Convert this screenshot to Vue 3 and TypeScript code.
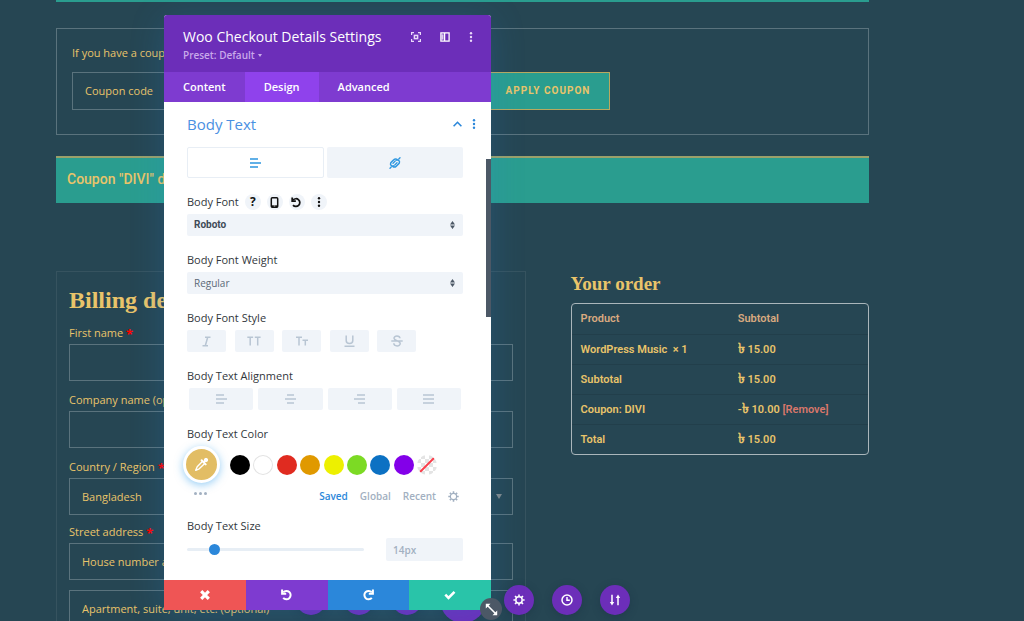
<script setup lang="ts">
import { ref } from 'vue'

interface OrderRow { label: string; sign: string; amount: string; remove?: boolean }

const rows: OrderRow[] = [
  { label: 'WordPress Music \u00a0× 1', sign: '', amount: '15.00' },
  { label: 'Subtotal', sign: '', amount: '15.00' },
  { label: 'Coupon: DIVI', sign: '-', amount: '10.00', remove: true },
  { label: 'Total', sign: '', amount: '15.00' },
]

const swatches = [
  { name: 'Black', cls: 'black' },
  { name: 'White', cls: 'white' },
  { name: 'Red', cls: 'red' },
  { name: 'Orange', cls: 'orange' },
  { name: 'Yellow', cls: 'yellow' },
  { name: 'Green', cls: 'green' },
  { name: 'Blue', cls: 'blue' },
  { name: 'Purple', cls: 'purple' },
  { name: 'Transparent', cls: 'clear' },
]

const alignments = [
  { name: 'Left', d: 'M0 1h8M0 5h11M0 9h8' },
  { name: 'Center', d: 'M2 1h7M0 5h11M2 9h7' },
  { name: 'Right', d: 'M3 1h8M0 5h11M4 9h7' },
  { name: 'Justify', d: 'M0 1h11M0 5h11M0 9h11' },
]

const tabs = ['Content', 'Design', 'Advanced']
const activeTab = ref('Design')
const size = ref(14)
const font = ref('Roboto')
const weight = ref('Regular')
</script>

<template>
  <div class="page">
    <main class="content">
      <div class="notice-edge"></div>

      <form class="coupon" @submit.prevent>
        <label class="coupon-text" for="coupon">If you have a coupon</label>
        <div class="coupon-row">
          <input id="coupon" class="box" type="text" placeholder="Coupon code" />
          <button class="apply" type="submit">APPLY COUPON</button>
        </div>
      </form>

      <p class="banner">Coupon "DIVI" does not exist!</p>

      <div class="columns">
        <section class="billing">
          <h2>Billing details</h2>
          <div class="field">
            <label for="first">First name <b>*</b></label>
            <input id="first" class="box" type="text" />
          </div>
          <div class="field">
            <label for="company">Company name (optional)</label>
            <input id="company" class="box" type="text" />
          </div>
          <div class="field country">
            <label for="country">Country / Region <b>*</b></label>
            <div class="select-wrap">
              <select id="country" class="box"><option>Bangladesh</option></select>
              <span class="caret"></span>
            </div>
          </div>
          <div class="field">
            <label for="street">Street address <b>*</b></label>
            <input id="street" class="box" type="text" placeholder="House number and street name" />
          </div>
          <input class="box" type="text" aria-label="Apartment" placeholder="Apartment, suite, unit, etc. (optional)" />
        </section>

        <section class="order">
          <h2>Your order</h2>
          <table>
            <thead>
              <tr><th>Product</th><th>Subtotal</th></tr>
            </thead>
            <tbody>
              <tr v-for="row in rows" :key="row.label">
                <td>{{ row.label }}</td>
                <td>{{ row.sign }}<span class="taka">৳</span>&nbsp;{{ row.amount }} <a v-if="row.remove" href="#">[Remove]</a></td>
              </tr>
            </tbody>
          </table>
        </section>
      </div>
    </main>

    <nav class="toolbar" aria-label="Builder">
      <button aria-label="Wireframe"></button>
      <button aria-label="Zoom"></button>
      <button aria-label="Desktop"></button>
      <button class="main" aria-label="Toggle builder"></button>
      <button aria-label="Page settings">
        <svg width="12" height="12" viewBox="0 0 12 12" fill="none" stroke="#fff"><circle cx="6" cy="6" r="3.2" stroke-width="1.5" /><path d="M6 .4v2M6 9.6v2M.4 6h2M9.6 6h2M2 2l1.4 1.4M8.6 8.6L10 10M10 2L8.6 3.4M3.4 8.6L2 10" stroke-width="1.6" /></svg>
      </button>
      <button aria-label="History">
        <svg width="12" height="12" viewBox="0 0 12 12" fill="none" stroke="#fff" stroke-width="1.5"><circle cx="6" cy="6" r="5" /><path d="M6 3v3.2h2.8" /></svg>
      </button>
      <button aria-label="Portability">
        <svg width="12" height="12" viewBox="0 0 12 12" fill="none" stroke="#fff" stroke-width="1.5"><path d="M3 .8v8M9 11.2v-8" /><path d="M.8 8h4.4L3 11.4zM6.8 4h4.4L9 .6z" fill="#fff" stroke="none" /></svg>
      </button>
    </nav>

    <aside class="modal" role="dialog" aria-labelledby="modal-title">
      <header>
        <div class="titles">
          <h1 id="modal-title">Woo Checkout Details Settings</h1>
          <button class="preset">Preset: Default <span></span></button>
        </div>
        <div class="tools">
          <button aria-label="Expand">
            <svg width="10" height="10" viewBox="0 0 10 10" fill="none" stroke="#ead9fa" stroke-width="1.2"><path d="M.6 3V.6H3M7 .6h2.4V3M9.4 7v2.4H7M3 9.4H.6V7" /><rect x="3.4" y="3.4" width="3.2" height="3.2" stroke-width="1.5" /></svg>
          </button>
          <button aria-label="Dock">
            <svg width="10" height="10" viewBox="0 0 10 10" fill="none" stroke="#fff" stroke-width="1.3"><rect x=".9" y=".9" width="8.2" height="8.2" /><path d="M4.6 1v8M1.5 3.2h2M1.5 5h2M1.5 6.8h2" /></svg>
          </button>
          <button aria-label="More">
            <svg width="4" height="10" viewBox="0 0 4 10" fill="#ead9fa"><circle cx="2" cy="1.3" r="1.2" /><circle cx="2" cy="5" r="1.2" /><circle cx="2" cy="8.7" r="1.2" /></svg>
          </button>
        </div>
      </header>

      <nav class="tabs">
        <button v-for="t in tabs" :key="t" :class="{ active: t === activeTab }" @click="activeTab = t">{{ t }}</button>
      </nav>

      <div class="body">
        <div class="section-head">
          <h2>Body Text</h2>
          <button aria-label="Collapse">
            <svg width="9" height="6" viewBox="0 0 9 6" fill="none" stroke="#2b87da" stroke-width="1.6"><path d="M.6 5.2L4.5 1.3l3.9 3.9" /></svg>
          </button>
          <button aria-label="Section options">
            <svg width="4" height="10" viewBox="0 0 4 10" fill="#2b87da"><circle cx="2" cy="1.3" r="1.2" /><circle cx="2" cy="5" r="1.2" /><circle cx="2" cy="8.7" r="1.2" /></svg>
          </button>
        </div>

        <div class="modes">
          <button class="on" aria-label="Text">
            <svg width="11" height="10" viewBox="0 0 11 10" stroke="#2e97e0" stroke-width="1.5"><path d="M0 1h8M0 5h11M0 9h8" /></svg>
          </button>
          <button aria-label="Link">
            <svg width="12" height="12" viewBox="0 0 12 12" fill="none" stroke="#2e97e0" stroke-width="1.5" stroke-linecap="round"><path d="M4.800 8.800A2.200 2.200 0 0 1 1.800 5.800L5 2.600A2.200 2.200 0 0 1 8.200 2.600M7.200 3.200A2.200 2.200 0 0 1 10.200 6.200L7 9.400A2.200 2.200 0 0 1 3.800 9.400" /><path d="M4 6.200L6.200 4M5.800 8L8 5.800M1 11.200L2.200 10M9.800 2L11 .800" stroke-width="1.300" /></svg>
          </button>
        </div>

        <div class="group">
          <div class="label-row">
            <label for="font">Body Font</label>
            <button class="mini" aria-label="Help">?</button>
            <button class="mini" aria-label="Responsive">
              <svg width="9" height="11" viewBox="0 0 9 11"><rect x="1.300" y=".8" width="6.400" height="9.400" rx="1" fill="none" stroke="#111" stroke-width="1.500" /><path d="M1.500 8.300h6v2h-6z" fill="#111" /><path d="M3.700 9h1.600" stroke="#fff" stroke-width=".7" /></svg>
            </button>
            <button class="mini" aria-label="Reset">
              <svg width="11" height="11" viewBox="0 0 12 12" fill="none" stroke="#111" stroke-width="1.900"><path d="M2.200 3.400A4.200 4.200 0 1 1 2.200 8.800" /><path d="M1.300 .500v3.900h4" /></svg>
            </button>
            <button class="mini" aria-label="Font options">
              <svg width="4" height="10" viewBox="0 0 4 10" fill="#111"><circle cx="2" cy="1.300" r="1.200" /><circle cx="2" cy="5" r="1.200" /><circle cx="2" cy="8.700" r="1.200" /></svg>
            </button>
          </div>
          <div class="select-wrap">
            <select id="font" v-model="font" class="control strong"><option>Roboto</option></select>
            <svg class="sorter" width="5" height="8" viewBox="0 0 5 8" fill="#4c5866"><path d="M0 3.400L2.500 0 5 3.400zM0 4.600L2.500 8 5 4.600z" /></svg>
          </div>
        </div>

        <div class="group">
          <div class="label-row"><label for="weight">Body Font Weight</label></div>
          <div class="select-wrap">
            <select id="weight" v-model="weight" class="control"><option>Regular</option></select>
            <svg class="sorter" width="5" height="8" viewBox="0 0 5 8" fill="#4c5866"><path d="M0 3.400L2.500 0 5 3.400zM0 4.600L2.500 8 5 4.600z" /></svg>
          </div>
        </div>

        <div class="group">
          <div class="label-row"><span>Body Font Style</span></div>
          <div class="styles">
            <button aria-label="Italic"><svg width="9" height="11" viewBox="0 0 9 11" fill="none" stroke="#b8c5d3" stroke-width="1.500"><path d="M3 1.200h5.500M.500 9.800H6M5.700 1.200L3.300 9.800" /></svg></button>
            <button aria-label="Uppercase"><svg width="14" height="10" viewBox="0 0 14 10" fill="none" stroke="#b8c5d3" stroke-width="1.500"><path d="M.300 1.200h5.800M3.200 1.200V9.500M7.800 1.200h5.800M10.700 1.200V9.500" /></svg></button>
            <button aria-label="Small caps"><svg width="12" height="10" viewBox="0 0 12 10" fill="none" stroke="#b8c5d3" stroke-width="1.500"><path d="M0 1.200h6M3 1.200V9.500M6.500 4.200H12M9.300 4.200V9.500" /></svg></button>
            <button aria-label="Underline"><svg width="11" height="12" viewBox="0 0 11 12" fill="none" stroke="#b8c5d3" stroke-width="1.500"><path d="M2.200 .500v5a3.300 3 0 0 0 6.600 0v-5M.500 11.200h10" /></svg></button>
            <button aria-label="Strikethrough"><svg width="12" height="12" viewBox="0 0 12 12" fill="none" stroke="#b8c5d3" stroke-width="1.500"><path d="M9 3.300C8.700 .300 3 .300 3 3.200 3 5.800 9.200 5.600 9.200 8.600 9.200 11.700 3 11.700 2.800 8.300M.300 6h11.400" /></svg></button>
          </div>
        </div>

        <div class="group">
          <div class="label-row"><span>Body Text Alignment</span></div>
          <div class="aligns">
            <button v-for="a in alignments" :key="a.name" :aria-label="a.name">
              <svg width="11" height="10" viewBox="0 0 11 10" fill="none" stroke="#b8c5d3" stroke-width="1.400"><path :d="a.d" /></svg>
            </button>
          </div>
        </div>

        <div class="group">
          <div class="label-row"><span>Body Text Color</span></div>
          <div class="colors">
            <button class="picker" aria-label="Pick color">
              <svg width="15" height="15" viewBox="0 0 15 15" fill="none" stroke="#fff"><path d="M8.600 4.300L3.200 9.800 1.700 13.300 5.200 11.800 10.700 6.400" stroke-width="1.400" stroke-linejoin="round" /><path d="M7.600 3.300l4.100 4.100M9.700 5.300l2.400-2.400" stroke-width="2" stroke-linecap="round" /><circle cx="12" cy="3" r="1.700" fill="#fff" /></svg>
            </button>
            <div class="swatches">
              <button v-for="s in swatches" :key="s.name" :class="s.cls" :aria-label="s.name">
                <svg v-if="s.cls === 'clear'" width="20" height="20" viewBox="0 0 20 20"><path d="M3 17L17 3" stroke="#fa3e4b" stroke-width="2" /></svg>
              </button>
            </div>
          </div>
          <div class="palette">
            <button class="dots" aria-label="More colors"><i></i><i></i><i></i></button>
            <button class="current">Saved</button>
            <button>Global</button>
            <button>Recent</button>
            <button aria-label="Palette settings">
              <svg width="11" height="11" viewBox="0 0 12 12" fill="none" stroke="#a2b0c1"><circle cx="6" cy="6" r="3.400" stroke-width="1.300" /><path d="M6 .300v2M6 9.700v2M.300 6h2M9.700 6h2M2 2l1.300 1.300M8.700 8.700L10 10M10 2L8.700 3.300M3.300 8.700L2 10" stroke-width="1.700" /></svg>
            </button>
          </div>
        </div>

        <div class="group size">
          <div class="label-row"><label for="size">Body Text Size</label></div>
          <div class="size-row">
            <input id="size" v-model.number="size" type="range" min="1" max="100" />
            <input class="control value" type="text" aria-label="Size value" :value="size + 'px'" />
          </div>
        </div>
      </div>

      <footer>
        <button class="cancel" aria-label="Discard"><svg width="10" height="10" viewBox="0 0 10 10" stroke="#fff" stroke-width="3.200"><path d="M1.200 1.200l7.600 7.600M8.800 1.200L1.200 8.800" /></svg></button>
        <button class="undo" aria-label="Undo"><svg width="12" height="12" viewBox="0 0 12 12" fill="none" stroke="#fff" stroke-width="2"><path d="M2.200 3.400A4.200 4.200 0 1 1 2.200 8.800" /><path d="M1.100 .500v4.200h4.100" /></svg></button>
        <button class="redo" aria-label="Redo"><svg width="12" height="12" viewBox="0 0 12 12" fill="none" stroke="#fff" stroke-width="2"><path d="M9.800 3.400A4.200 4.200 0 1 0 9.800 8.800" /><path d="M10.900 .500v4.200H6.800" /></svg></button>
        <button class="save" aria-label="Save"><svg width="12" height="10" viewBox="0 0 12 10" fill="none" stroke="#fff" stroke-width="2.600"><path d="M1.300 4.700l3.200 3.200 6-6" /></svg></button>
      </footer>

      <span class="scroll"></span>
      <button class="resize" aria-label="Resize">
        <svg width="13" height="13" viewBox="0 0 13 13" fill="#fff"><path d="M2 2l9 9" stroke="#fff" stroke-width="1.600" /><path d="M.800 .800h4.700L.800 5.500zM12.200 12.200H7.500l4.700-4.700z" /></svg>
      </button>
    </aside>
  </div>
</template>

<style>
body {
  margin: 0;
  background: #264653;
}
</style>

<style scoped>
* {
  box-sizing: border-box;
}
.page {
  position: relative;
  height: 100vh;
  overflow: hidden;
  background: #264653;
  color: #e9c46a;
  font: 11px/18px "Open Sans", sans-serif;
}
button, input, select {
  margin: 0;
  padding: 0;
  border: 0;
  border-radius: 0;
  background: none;
  font: inherit;
  color: inherit;
  appearance: none;
  outline: 0;
}
button {
  display: flex;
  align-items: center;
  justify-content: center;
  cursor: pointer;
}
svg {
  display: block;
  flex: none;
}
h1, h2, p {
  margin: 0;
}

.content {
  margin: 0 155px 0 56px;
}
.notice-edge {
  height: 2px;
  background: #2a9d8f;
}
.coupon {
  margin-top: 26px;
  height: 107px;
  padding: 15px;
  border: 1px solid #5a737d;
}
.coupon-text {
  display: block;
  margin-bottom: 10px;
}
.coupon-row {
  display: flex;
}
.coupon-row .box {
  width: 414px;
  height: 38px;
  padding-bottom: 2px;
}
.apply {
  width: 124px;
  height: 38px;
  border: 1px solid #b9a95f;
  background: #2a9d8f;
  font: 700 10px/18px Roboto, sans-serif;
  letter-spacing: 1px;
}
.banner {
  margin-top: 21px;
  height: 47px;
  padding: 0 11px;
  border-top: 2px solid #9ba06a;
  background: #2a9d8f;
  font: 500 14px/43px Roboto, sans-serif;
}
.columns {
  display: grid;
  grid-template-columns: 469fr 298fr;
  gap: 45px;
  margin-top: 68px;
}
.billing {
  padding: 12px;
  border: 1px solid #36535f;
}
.billing h2 {
  margin-bottom: 8px;
  font: 700 24px/32px "Liberation Serif", serif;
}
.field {
  margin-bottom: 10px;
}
.country {
  margin-bottom: 8px;
}
.field label {
  display: block;
  height: 20px;
}
.field b {
  color: #f00;
  font-size: 13px;
  line-height: 13px;
  vertical-align: -2px;
}
.box {
  display: block;
  width: 100%;
  height: 37px;
  padding: 0 12px;
  border: 1px solid #5a737d;
}
.box::placeholder {
  color: #e9c46a;
  opacity: 1;
}
.select-wrap {
  position: relative;
}
.caret {
  position: absolute;
  right: 11px;
  top: 16px;
  border: 3px solid transparent;
  border-top: 5px solid #82888a;
  border-bottom: 0;
}
.order h2 {
  font: 700 19px/26px "Liberation Serif", serif;
  margin-bottom: 6px;
}
.order table {
  width: 100%;
  border: 1px solid #aab6bb;
  border-radius: 4px;
  border-spacing: 0;
  font: 500 11px/16px Roboto, sans-serif;
}
.order th, .order td {
  height: 30px;
  padding: 0 9px;
  text-align: left;
  font-weight: 600;
}
.order th {
  color: #d9aa80;
}
.order td {
  border-top: 1px solid #223f4b;
}
.order th:first-child {
  width: 53%;
}
.order a {
  color: #d9776b;
  text-decoration: none;
}
.taka {
  font-size: 14px;
  line-height: 14px;
}

.toolbar {
  position: absolute;
  left: 296px;
  bottom: -2px;
  display: flex;
  align-items: center;
  gap: 18px;
}
.toolbar button {
  width: 30px;
  height: 30px;
  border-radius: 50%;
  background: #6c2eb9;
  box-shadow: 0 2px 8px rgba(20, 40, 60, 0.3);
}
.toolbar .main {
  width: 46px;
  height: 46px;
}

.modal {
  position: absolute;
  left: 164px;
  top: 15px;
  bottom: 11px;
  width: 327px;
  display: flex;
  flex-direction: column;
  border-radius: 3px 3px 0 0;
  background: #fff;
  color: #4c5866;
  font-weight: 600;
  box-shadow: 0 5px 34px rgba(43, 135, 218, 0.22);
}
.modal header {
  display: flex;
  justify-content: space-between;
  height: 57px;
  padding: 12px 18px 0 19px;
  border-radius: 3px 3px 0 0;
  background: #6c2eb9;
  color: #fff;
}
.modal h1 {
  font: 600 14px/20px "Open Sans", sans-serif;
  font-weight: 500;
  white-space: nowrap;
}
.preset {
  gap: 3px;
  font-size: 10px;
  line-height: 16px;
  color: #c9a9ea;
}
.preset span {
  border: 2px solid transparent;
  border-top: 3px solid #c9a9ea;
  border-bottom: 0;
}
.tools {
  display: flex;
  gap: 19px;
  height: 20px;
  align-items: center;
}
.tabs {
  display: flex;
  flex: none;
  height: 30px;
  background: #7e3bd0;
  color: #fff;
}
.tabs button {
  padding: 0 19px;
  font-weight: 600;
}
.tabs .active {
  background: #8f42ec;
}
.body {
  flex: 1;
  padding: 0 28px 0 23px;
}
.section-head {
  display: flex;
  align-items: center;
  height: 43px;
  margin: 0 -13px 2px 0;
  gap: 10px;
}
.section-head h2 {
  flex: 1;
  font: 400 15px/20px "Open Sans", sans-serif;
  color: #4a90e2;
}
.modes {
  display: grid;
  grid-template-columns: 1fr 1fr;
  gap: 3px;
}
.modes button {
  height: 31px;
  border-radius: 2px;
  background: #f0f4f9;
}
.modes .on {
  border: 1px solid #e8eef5;
  background: #fff;
}
.group {
  margin-top: 12px;
}
.label-row {
  display: flex;
  align-items: center;
  height: 24px;
  gap: 6px;
  color: #32373c;
  font-weight: 500;
}
.mini {
  width: 16px;
  height: 16px;
  border-radius: 50%;
  background: #f0f4f9;
  color: #111;
  font-weight: 700;
  font-size: 12px;
  line-height: 16px;
}
.control {
  display: block;
  width: 100%;
  height: 22px;
  padding: 0 7px;
  border-radius: 2px;
  background: #f0f4f9;
  color: #5c6978;
  font-size: 10px;
  font-weight: 400;
}
.strong {
  color: #3e4a57;
  font-family: Roboto, sans-serif;
  font-weight: 700;
}
.sorter {
  position: absolute;
  right: 8px;
  top: 7px;
}
.styles {
  display: flex;
  justify-content: space-between;
  margin-right: 47px;
}
.styles button {
  width: 39px;
  height: 22px;
  border-radius: 2px;
  background: #f0f4f9;
}
.aligns {
  display: grid;
  grid-template-columns: repeat(4, 1fr);
  gap: 5px;
  padding: 0 2px;
}
.aligns button {
  height: 22px;
  border-radius: 2px;
  background: #f0f4f9;
}
.colors {
  display: flex;
  align-items: center;
  gap: 10px;
  height: 37px;
  margin-left: -4px;
}
.picker {
  width: 37px;
  height: 37px;
  border: 3px solid #fff;
  border-radius: 50%;
  background: #e2bd64;
  box-shadow: 0 2px 9px rgba(43, 155, 235, 0.5);
}
.swatches {
  display: flex;
  flex: 1;
  justify-content: space-between;
  margin-right: 26px;
}
.swatches button {
  width: 20px;
  height: 20px;
  border-radius: 50%;
  overflow: hidden;
}
.black { background: #000; }
.white { background: #fff; box-shadow: inset 0 0 0 1px #e3e3e3; }
.red { background: #e02b20; }
.orange { background: #e09900; }
.yellow { background: #edf000; }
.green { background: #7cda24; }
.blue { background: #0c71c3; }
.purple { background: #8300e9; }
.clear { background: repeating-conic-gradient(#e4e4e4 0 25%, #fff 0 50%) 0 0 / 8px 8px; }
.palette {
  display: flex;
  align-items: center;
  gap: 12px;
  height: 26px;
  margin-right: 4px;
  color: #a2b0c1;
  font-size: 10px;
}
.palette .dots {
  align-self: flex-start;
  gap: 2px;
  height: 20px;
  margin: 0 auto 0 7px;
}
.dots i {
  width: 3px;
  height: 3px;
  border-radius: 50%;
  background: #a2b0c1;
}
.palette .current {
  color: #2b87da;
}
.size {
  margin-top: 5px;
}
.size-row {
  display: flex;
  align-items: center;
  gap: 22px;
}
.size-row input[type="range"] {
  flex: 1;
  min-width: 0;
  height: 11px;
}
input[type="range"]::-webkit-slider-runnable-track {
  height: 3px;
  border-radius: 2px;
  background: #e7eef5;
}
input[type="range"]::-webkit-slider-thumb {
  width: 11px;
  height: 11px;
  margin-top: -4px;
  border-radius: 50%;
  background: #2b87da;
  appearance: none;
}
.size-row .value {
  width: 77px;
  height: 23px;
  color: #a2b0c1;
  font-weight: 600;
}
.modal footer {
  display: grid;
  grid-template-columns: repeat(4, 1fr);
  height: 30px;
}
.cancel { background: #ef5555; }
.undo { background: #7e3bd0; }
.redo { background: #2b87da; }
.save { background: #29c4a9; }
.scroll {
  position: absolute;
  right: 0;
  top: 144px;
  width: 5px;
  height: 158px;
  background: #4c5866;
}
.resize {
  position: absolute;
  right: -11px;
  bottom: -10px;
  width: 22px;
  height: 22px;
  border-radius: 50%;
  background: #4c5866;
}
</style>
